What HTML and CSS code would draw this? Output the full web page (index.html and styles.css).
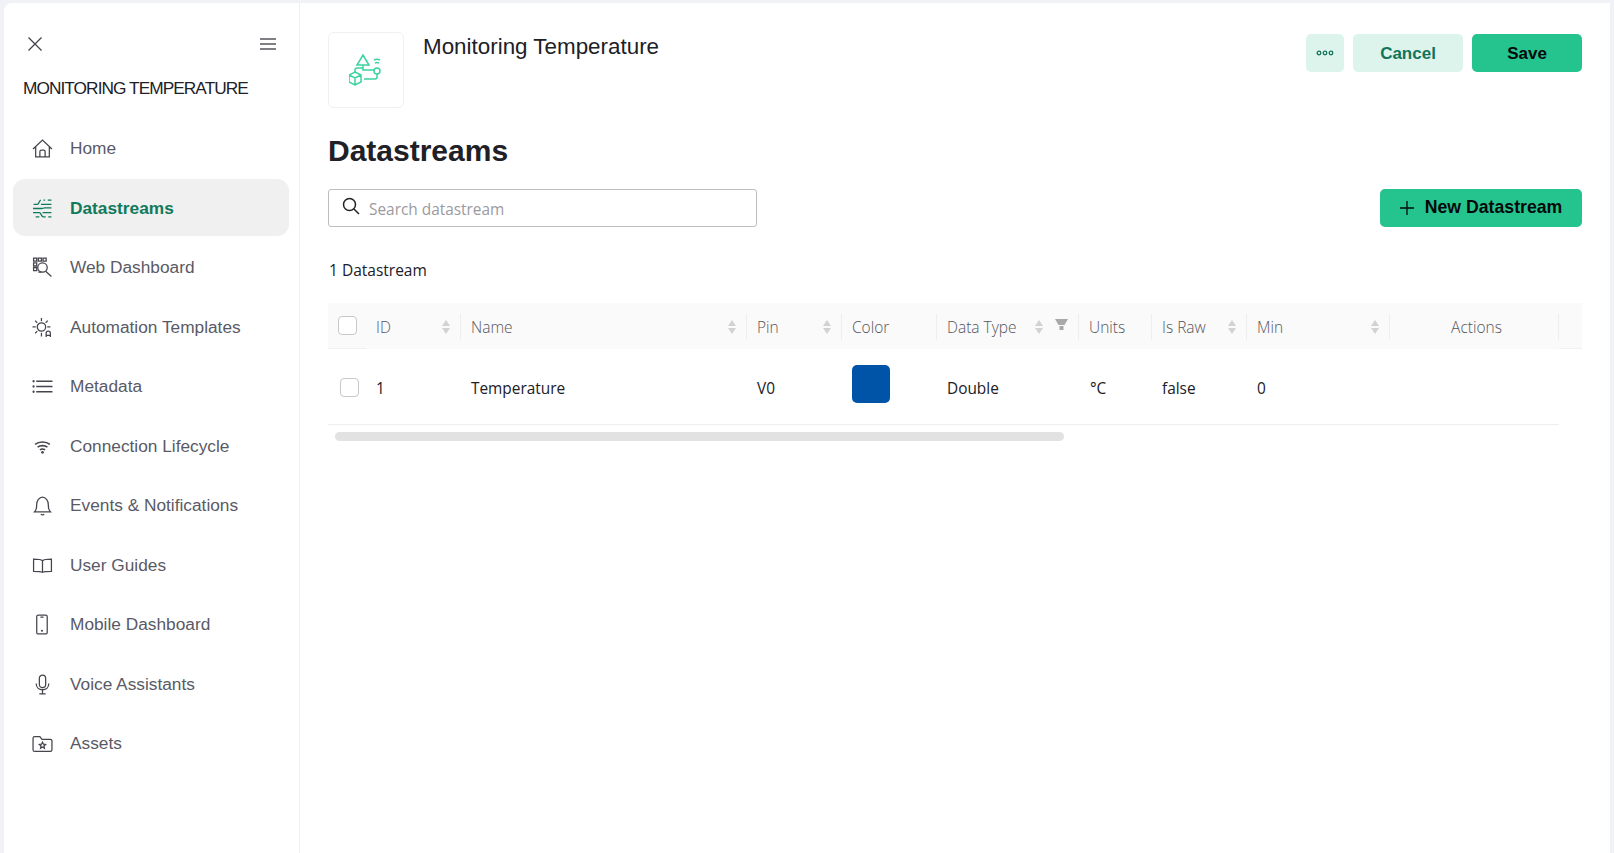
FILE: index.html
```html
<!DOCTYPE html>
<html lang="en">
<head>
<meta charset="utf-8">
<title>Datastreams</title>
<link rel="stylesheet" href="styles.css">
</head>
<body>
<div class="card">
  <aside class="sidebar">
    <div class="side-top">
      <svg class="ico-close" viewBox="0 0 16 16"><path d="M1.500 1.500l13 13M14.500 1.500l-13 13"/></svg>
      <svg class="ico-menu" viewBox="0 0 16 12"><path d="M0 1h16M0 6h16M0 11h16"/></svg>
    </div>
    <div class="side-title">MONITORING TEMPERATURE</div>
    <nav class="nav">
      <a class="nav-item"><svg viewBox="0 0 20 20"><path d="M1 10.500L10 2l9 8.500M3.500 8.500V18h13V8.500M7.500 18v-5a1.500 1.500 0 0 1 1.500-1.500h2a1.500 1.500 0 0 1 1.500 1.500v5"/></svg><span>Home</span></a>
      <a class="nav-item active"><svg viewBox="0 0 20 20"><path d="M8.500 2c-2 0-1.500 4-3.500 4H1.500M11 2h1.500M15 2h3.500M8.500 6h10M1 10h8c2 0 1.500-.5 3-.5h6.500M1 14h6c2 0 1.500 4 4 4h2M10 14h8.500M3.500 18H7M15.500 18h3"/></svg><span>Datastreams</span></a>
      <a class="nav-item"><svg viewBox="0 0 20 20"><path d="M1.500 1h3v3h-3zM6 1h3v3H6zM10.500 1h3v3h-3zM1.500 5.500h3v3h-3zM1.500 10h3v3h-3zM6 14.500h3M18.500 18.500l-5.500-5"/><circle cx="10" cy="10" r="4.500"/></svg><span>Web Dashboard</span></a>
      <a class="nav-item"><svg viewBox="0 0 20 20"><circle cx="9" cy="9.500" r="4"/><path d="M9 1v3M9 15v3.500M.5 9.500h3M3 3.500l2 2M15 3.500l-2 2M3 15.500l2-2M14.500 9.500h3M13.500 19v-3.500a2 2 0 0 1 4 0V19M13.500 17.500h4"/></svg><span>Automation Templates</span></a>
      <a class="nav-item"><svg viewBox="0 0 20 20"><path d="M4 5h15.500M4 10h15.500M4 15h15.500"/><circle class="fill" cx="1.500" cy="5" r="1.100"/><circle class="fill" cx="1.500" cy="10" r="1.100"/><circle class="fill" cx="1.500" cy="15" r="1.100"/></svg><span>Metadata</span></a>
      <a class="nav-item"><svg class="wifi" viewBox="0 0 20 20"><path d="M3 8c3.500-3 10.500-3 14 0M5.300 10.700c2.500-2 6.900-2 9.400 0M7.500 13.200c1.500-1 3.500-1 5 0"/><circle class="fill" cx="10" cy="15.500" r="1.300"/></svg><span>Connection Lifecycle</span></a>
      <a class="nav-item"><svg viewBox="0 0 20 20"><path d="M2.500 16c2-2 2-3.500 2-7 0-3.500 2.500-7 5.500-7s5.500 3.500 5.500 7c0 3.500 0 5 2 7zM8.500 18c.5 1.300 2.500 1.300 3 0"/></svg><span>Events &amp; Notifications</span></a>
      <a class="nav-item"><svg viewBox="0 0 20 20"><path d="M10 5.500C9 4.500 7 4 1.500 4v11.500c5 0 7.500 0 8.500 1 1-1 3.500-1 8.500-1V4C13 4 11 4.500 10 5.500zM10 5.500v11"/></svg><span>User Guides</span></a>
      <a class="nav-item"><svg viewBox="0 0 20 20"><rect x="4.500" y="1" width="10" height="18" rx="1.500"/><path d="M8 3h3"/><circle class="fill" cx="9.500" cy="16" r="1"/></svg><span>Mobile Dashboard</span></a>
      <a class="nav-item"><svg viewBox="0 0 20 20"><rect x="7" y="1" width="6" height="12" rx="3"/><path d="M4 9c0 8 12 8 12 0M10 15v4M7 19h6"/></svg><span>Voice Assistants</span></a>
      <a class="nav-item"><svg viewBox="0 0 20 20"><path d="M1 5c0-1 .5-1.500 1.500-1.500h5l2 2.500h8c1 0 1.500.5 1.500 1.500v8.500c0 1-.5 1.500-1.500 1.500h-15c-1 0-1.500-.5-1.500-1.500z"/><path d="M10 8.800l.9 1.900 2 .2-1.500 1.400.4 2.100-1.800-1.100-1.800 1.100.4-2.100-1.500-1.400 2-.2z"/></svg><span>Assets</span></a>
    </nav>
  </aside>
  <main class="main">
    <header class="head">
      <div class="app-ico">
        <svg viewBox="0 0 34 32"><path d="M14 1l6 10H8zM14 11v5h11M6 18v-2c0-1.500 1-2 2-2h6M25 6c2-1 4-1 6 0M26 9c1.300-.6 2.700-.6 4 0M15 25h11c1.500 0 2-1 2-2v-3"/><circle cx="28" cy="17" r="3"/><path d="M6 18l6 3v7l-6 3-6-3v-7zM0 21l6 3 6-3M6 24v7"/></svg>
      </div>
      <h2 class="app-name">Monitoring Temperature</h2>
      <div class="head-actions">
        <button class="btn light more"><svg viewBox="0 0 18 6"><circle cx="3" cy="3" r="1.800"/><circle cx="9" cy="3" r="1.800"/><circle cx="15" cy="3" r="1.800"/></svg></button>
        <button class="btn light cancel">Cancel</button>
        <button class="btn primary save">Save</button>
      </div>
    </header>
    <h1 class="page-title">Datastreams</h1>
    <div class="toolbar">
      <label class="search">
        <svg viewBox="0 0 18 18"><circle cx="7.500" cy="7.500" r="6"/><path d="M12 12l5 5"/></svg>
        <span>Search datastream</span>
      </label>
      <button class="btn primary new"><svg viewBox="0 0 14 14"><path d="M7 0v14M0 7h14"/></svg>New Datastream</button>
    </div>
    <div class="count">1 Datastream</div>
    <table class="grid">
      <colgroup>
        <col class="c-check"><col class="c-id"><col class="c-name"><col class="c-pin"><col class="c-color"><col class="c-type"><col class="c-units"><col class="c-raw"><col class="c-min"><col class="c-actions"><col class="c-pad">
      </colgroup>
      <thead>
        <tr>
          <th class="th-check"><span class="box"></span></th>
          <th><div class="th-in">ID<svg class="sort" viewBox="0 0 8 14"><path d="M4 0l4 6H0zM0 8h8l-4 6z"/></svg></div></th>
          <th><div class="th-in">Name<svg class="sort" viewBox="0 0 8 14"><path d="M4 0l4 6H0zM0 8h8l-4 6z"/></svg></div></th>
          <th><div class="th-in">Pin<svg class="sort" viewBox="0 0 8 14"><path d="M4 0l4 6H0zM0 8h8l-4 6z"/></svg></div></th>
          <th><div class="th-in">Color</div></th>
          <th><div class="th-in">Data Type<svg class="sort" viewBox="0 0 8 14"><path d="M4 0l4 6H0zM0 8h8l-4 6z"/></svg><svg class="filter" viewBox="0 0 13 12"><path d="M0 0h13L9.500 6h-6zM4.500 7h4v4h-4z"/></svg></div></th>
          <th><div class="th-in">Units</div></th>
          <th><div class="th-in">Is Raw<svg class="sort" viewBox="0 0 8 14"><path d="M4 0l4 6H0zM0 8h8l-4 6z"/></svg></div></th>
          <th><div class="th-in">Min<svg class="sort" viewBox="0 0 8 14"><path d="M4 0l4 6H0zM0 8h8l-4 6z"/></svg></div></th>
          <th><div class="th-in center">Actions</div></th>
          <th class="th-pad"></th>
        </tr>
      </thead>
      <tbody>
        <tr>
          <td class="td-check"><span class="box"></span></td>
          <td>1</td>
          <td>Temperature</td>
          <td>V0</td>
          <td><span class="swatch"></span></td>
          <td>Double</td>
          <td class="td-units">°C</td>
          <td>false</td>
          <td>0</td>
          <td></td>
          <td class="td-pad"></td>
        </tr>
      </tbody>
    </table>
    <div class="scroll"><div class="thumb"></div></div>
  </main>
</div>
</body>
</html>
```

FILE: styles.css
```css
* { box-sizing: border-box; }
html, body { height: 100%; }
body {
  margin: 0;
  background: #f0f2f5;
  font-family: "Liberation Sans", Arial, sans-serif;
  color: #202027;
  overflow: hidden;
}
.card {
  margin: 3px 4px 0;
  height: 850px;
  background: #fff;
  border-radius: 8px 0 0 0;
  display: flex;
}
.sidebar {
  width: 296px;
  flex: none;
  border-right: 1px solid #f0f0f0;
  padding: 0 10px 0 9px;
}
.side-top {
  display: flex;
  justify-content: space-between;
  align-items: center;
  height: 16px;
  margin-top: 33px;
  padding: 0 13px 0 14px;
}
.ico-close { width: 16px; height: 16px; fill: none; stroke: #44444c; stroke-width: 1.300; }
.ico-menu { width: 16px; height: 12px; fill: none; stroke: #55555c; stroke-width: 1.300; }
.side-title {
  margin-top: 23px;
  padding-left: 10px;
  font-size: 17.300px;
  letter-spacing: -0.950px;
  line-height: 26px;
  color: #202027;
}
.nav {
  margin-top: 18px;
  display: flex;
  flex-direction: column;
  gap: 2.500px;
}
.nav-item {
  height: 57px;
  display: flex;
  align-items: center;
  gap: 17.500px;
  padding: 2px 0 0 18.500px;
  border-radius: 12px;
  font-size: 17.300px;
  color: #5a5a66;
}
.nav-item svg {
  width: 21px;
  height: 21px;
  flex: none;
  fill: none;
  stroke: #45454d;
  stroke-width: 1.200;
}
.nav-item svg.wifi { stroke-width: 1.500; }
.nav-item svg .fill { fill: #45454d; stroke: none; }
.nav-item.active {
  background: #f0f0f0;
  color: #0f7a5c;
  font-weight: 700;
}
.nav-item.active svg { stroke: #0f7a5c; }
.main {
  flex: 1;
  min-width: 0;
  padding: 29px 28px 0;
}
.head { display: flex; align-items: flex-start; }
.app-ico {
  width: 76px;
  height: 76px;
  border: 1px solid #f0f0f0;
  border-radius: 6px;
  display: flex;
  align-items: center;
  justify-content: center;
}
.app-ico svg { width: 34px; height: 32px; fill: none; stroke: #3bd39f; stroke-width: 1.500; }
.app-name {
  margin: 0 0 0 19px;
  font-size: 22.400px;
  font-weight: 400;
  line-height: 30px;
  color: #202027;
}
.head-actions { margin-left: auto; margin-top: 2px; display: flex; gap: 9px; }
.btn {
  height: 38px;
  border: 0;
  border-radius: 5px;
  font-family: inherit;
  font-size: 17px;
  font-weight: 700;
  padding: 0;
  display: flex;
  align-items: center;
  justify-content: center;
}
.light { background: #dcf4eb; color: #13735a; }
.primary { background: #25c48f; color: #06090a; }
.more { width: 38px; }
.more svg { width: 18px; height: 6px; fill: none; stroke: #13735a; stroke-width: 1.300; }
.cancel, .save { width: 110px; padding-top: 2px; }
.page-title {
  margin: 18px 0 0;
  font-size: 30px;
  line-height: 50px;
  font-weight: 700;
  color: #202027;
}
.toolbar {
  margin-top: 13px;
  display: flex;
  justify-content: space-between;
  align-items: center;
}
.search {
  width: 429px;
  height: 38px;
  border: 1px solid #bdbdbd;
  border-radius: 3px;
  display: flex;
  align-items: center;
  gap: 9px;
  padding: 2px 0 0 13px;
  font-family: "Open Sans", sans-serif;
  font-size: 15.400px;
  color: #9a9aa0;
}
.search svg { width: 18px; height: 18px; margin-top: -6px; fill: none; stroke: #222; stroke-width: 1.500; }
.new {
  width: 202px;
  gap: 11px;
  padding-bottom: 1px;
  font-size: 17.700px;
}
.new svg { width: 14px; height: 14px; flex: none; fill: none; stroke: #0a0a0a; stroke-width: 1.300; }
.count {
  margin-top: 31px;
  padding-left: 1px;
  font-family: "Open Sans", sans-serif;
  font-size: 15.500px;
  line-height: 24px;
  color: #202027;
}
.grid {
  margin-top: 21px;
  width: 1254px;
  table-layout: fixed;
  border-collapse: separate;
  border-spacing: 0;
  font-family: "Open Sans", sans-serif;
  font-size: 15.400px;
}
.c-check { width: 38px; }
.c-id { width: 95px; }
.c-name { width: 286px; }
.c-pin { width: 95px; }
.c-color { width: 95px; }
.c-type { width: 142px; }
.c-units { width: 73px; }
.c-raw { width: 95px; }
.c-min { width: 143px; }
.c-actions { width: 169px; }
.c-pad { width: 23px; }
.grid th {
  height: 46px;
  padding: 0;
  background: #fafafa;
  font-size: 15.500px;
  font-weight: 300;
  color: #55555c;
  text-align: left;
}
.th-check, .th-pad { border-bottom: 1px solid #f0f0f0; }
.th-check { padding-left: 10px !important; }
.th-in {
  display: flex;
  align-items: center;
  height: 26px;
  padding: 0 10px;
  border-right: 1px solid #eeeeee;
  margin-top: 1px;
}
.th-in.center { justify-content: center; padding-left: 15px; }
.sort { width: 8px; height: 14px; margin-left: auto; fill: #d2d2d2; flex: none; }
.filter { width: 13px; height: 12px; margin: -3px 0 0 12px; fill: #a8a8a8; flex: none; }
.box {
  display: block;
  width: 19px;
  height: 19px;
  border: 1px solid #c8c8c8;
  border-radius: 4px;
  background: #fff;
}
.grid td {
  height: 76px;
  padding: 4px 0 0 10px;
  border-bottom: 1px solid #eeeeee;
  color: #202027;
}
.grid td.td-pad { border-bottom: 0; }
.grid td.td-units { padding-left: 11px; }
.grid td.td-check { padding: 1px 0 0 12px; }
.swatch {
  display: block;
  width: 38px;
  height: 38px;
  margin-bottom: 9px;
  border-radius: 5px;
  background: #0054a8;
}
.scroll { margin: 7px 0 0 7px; }
.thumb { width: 729px; height: 9px; border-radius: 5px; background: #e2e2e2; }
```
